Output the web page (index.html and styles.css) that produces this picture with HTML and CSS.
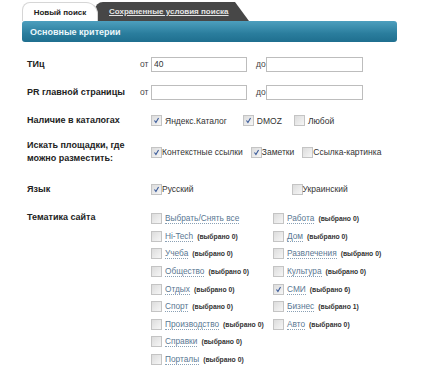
FILE: index.html
```html
<!DOCTYPE html>
<html lang="ru">
<head>
  <meta charset="UTF-8">
  <title>Поиск площадок</title>
  <link rel="stylesheet" href="styles.css">
</head>
<body>
  <div class="search-box">
    <!-- Tabs -->
    <div class="tabs">
      <div class="tab active">Новый поиск</div>
      <div class="tab saved"><a href="#">Сохраненные условия поиска</a></div>
    </div>

    <div class="section-head">Основные критерии</div>

    <div class="row r1">
      <div class="label">ТИц</div>
      <div class="controls">
        <span class="word">от</span><input class="field" type="text" value="40">
        <span class="word to">до</span><input class="field wide" type="text">
      </div>
    </div>

    <div class="row r2">
      <div class="label">PR главной страницы</div>
      <div class="controls">
        <span class="word">от</span><input class="field" type="text">
        <span class="word to">до</span><input class="field wide" type="text">
      </div>
    </div>

    <div class="row r3">
      <div class="label">Наличие в каталогах</div>
      <div class="controls opts">
        <label class="opt yandex"><span class="cb on"><svg viewBox="0 0 11 11"><path d="M3 5.5 L4.8 8 L8 2.5"/></svg></span>Яндекс.Каталог</label>
        <label class="opt dmoz"><span class="cb on"><svg viewBox="0 0 11 11"><path d="M3 5.5 L4.8 8 L8 2.5"/></svg></span>DMOZ</label>
        <label class="opt"><span class="cb"></span>Любой</label>
      </div>
    </div>

    <div class="row r4">
      <div class="label">Искать площадки, где<br>можно разместить:</div>
      <div class="controls opts tight">
        <label class="opt"><span class="cb on"><svg viewBox="0 0 11 11"><path d="M3 5.5 L4.8 8 L8 2.5"/></svg></span>Контекстные ссылки</label>
        <label class="opt"><span class="cb on"><svg viewBox="0 0 11 11"><path d="M3 5.5 L4.8 8 L8 2.5"/></svg></span>Заметки</label>
        <label class="opt"><span class="cb"></span>Ссылка-картинка</label>
      </div>
    </div>

    <div class="row r5">
      <div class="label">Язык</div>
      <div class="controls opts tight lang">
        <label class="opt"><span class="cb on"><svg viewBox="0 0 11 11"><path d="M3 5.5 L4.8 8 L8 2.5"/></svg></span>Русский</label>
        <label class="opt"><span class="cb"></span>Украинский</label>
      </div>
    </div>

    <div class="row topics-row">
      <div class="label">Тематика сайта</div>
      <div class="topics">
        <div class="topic"><span class="cb"></span><a href="#">Выбрать/Снять все</a></div>
        <div class="topic"><span class="cb"></span><a href="#">Работа</a><small>(выбрано 0)</small></div>
        <div class="topic"><span class="cb"></span><a href="#">Hi-Tech</a><small>(выбрано 0)</small></div>
        <div class="topic"><span class="cb"></span><a href="#">Дом</a><small>(выбрано 0)</small></div>
        <div class="topic"><span class="cb"></span><a href="#">Учеба</a><small>(выбрано 0)</small></div>
        <div class="topic"><span class="cb"></span><a href="#">Развлечения</a><small>(выбрано 0)</small></div>
        <div class="topic"><span class="cb"></span><a href="#">Общество</a><small>(выбрано 0)</small></div>
        <div class="topic"><span class="cb"></span><a href="#">Культура</a><small>(выбрано 0)</small></div>
        <div class="topic"><span class="cb"></span><a href="#">Отдых</a><small>(выбрано 0)</small></div>
        <div class="topic"><span class="cb on"><svg viewBox="0 0 11 11"><path d="M3 5.5 L4.8 8 L8 2.5"/></svg></span><a href="#">СМИ</a><small>(выбрано 6)</small></div>
        <div class="topic"><span class="cb"></span><a href="#">Спорт</a><small>(выбрано 0)</small></div>
        <div class="topic"><span class="cb"></span><a href="#">Бизнес</a><small>(выбрано 1)</small></div>
        <div class="topic"><span class="cb"></span><a href="#">Производство</a><small>(выбрано 0)</small></div>
        <div class="topic"><span class="cb"></span><a href="#">Авто</a><small>(выбрано 0)</small></div>
        <div class="topic"><span class="cb"></span><a href="#">Справки</a><small>(выбрано 0)</small></div>
        <div class="topic"></div>
        <div class="topic"><span class="cb"></span><a href="#">Порталы</a><small>(выбрано 0)</small></div>
      </div>
    </div>
  </div>
</body>
</html>
```

FILE: styles.css
```css
* {
  margin: 0;
  padding: 0;
  box-sizing: border-box;
}

body {
  font-family: "Liberation Sans", Arial, sans-serif;
  font-size: 8.5px;
  color: #333;
  background: #fff;
}

.search-box {
  margin-left: 22px;
  width: 375px;
  padding-top: 2px;
}

/* Tabs */
.tabs {
  display: flex;
  height: 19px;
}

.tab {
  height: 19px;
  font-weight: bold;
  font-size: 8px;
  display: flex;
  align-items: center;
}

.tab.active {
  width: 76px;
  background: #fff;
  border: 1px solid #d6d6d6;
  border-bottom: none;
  border-radius: 8px 12px 0 0;
  color: #222;
  justify-content: center;
  position: relative;
  z-index: 1;
}

.tab.saved {
  width: 154px;
  margin-left: -3px;
  padding-left: 14px;
  background: #474747;
  border-radius: 8px 0 0 0;
  clip-path: polygon(0 0, 140px 0, 100% 100%, 0 100%);
}

.tab.saved a {
  color: #e4e4e4;
  text-decoration: underline;
}

.section-head {
  height: 21px;
  border-radius: 3px;
  background: linear-gradient(#4d9fbe, #2a7d9d 60%, #1f6f8f);
  color: #eaf6fa;
  font-weight: bold;
  font-size: 9px;
  padding-left: 8px;
  display: flex;
  align-items: center;
}

/* Rows */
.row {
  display: grid;
  grid-template-columns: 118px 1fr;
  align-items: center;
}

.r1 { height: 36px; padding-top: 8px; }
.r2 { height: 28px; }
.r3 { height: 29px; }
.r4 { height: 34px; }
.r5 { height: 38px; padding-top: 2px; }

.label {
  padding-left: 5px;
  font-weight: bold;
  font-size: 9px;
  color: #222;
  line-height: 13px;
  white-space: nowrap;
}

.controls {
  display: flex;
  align-items: center;
}

.word {
  width: 11px;
  color: #444;
}

.word.to {
  margin-left: 9px;
  width: 10px;
}

.field {
  width: 96px;
  height: 15px;
  border: 1px solid #bdbdbd;
  font-family: "Liberation Sans", Arial, sans-serif;
  font-size: 8.5px;
  padding-left: 2px;
  color: #333;
}

.field.wide {
  width: 97px;
}

/* Checkboxes */
.cb {
  width: 11px;
  height: 11px;
  border: 1px solid #c4c4c4;
  background: linear-gradient(135deg, #dcdcdc, #f6f6f6);
  display: inline-block;
  flex-shrink: 0;
}

.cb svg {
  display: block;
  width: 9px;
  height: 9px;
}

.cb path {
  fill: none;
  stroke: #3b5b9a;
  stroke-width: 1.4;
}

.opts {
  padding-left: 11px;
}

.opt {
  display: flex;
  align-items: center;
  gap: 3px;
  color: #333;
}

.opt.yandex {
  margin-right: 16px;
}

.opt.dmoz {
  margin-right: 12px;
}

.tight .opt {
  gap: 0;
  margin-right: 8px;
}

.lang .opt:first-child {
  margin-right: 98px;
}

/* Topics */
.topics-row {
  align-items: start;
  margin-top: 3px;
}

.topics-row .label {
  margin-top: 1px;
}

.topics {
  padding-left: 11px;
  display: grid;
  grid-template-columns: 122px 1fr;
  grid-auto-rows: 17.6px;
}

.topic {
  display: flex;
  align-items: center;
  gap: 4px;
  white-space: nowrap;
}

.topic .cb {
  margin-right: -1px;
}

.topic a {
  color: #5a7893;
  text-decoration: none;
  border-bottom: 1px dotted #8aa0b4;
  line-height: 10px;
  font-size: 8.3px;
}

.topic small {
  font-size: 6.8px;
  font-weight: bold;
  color: #333;
}
```
